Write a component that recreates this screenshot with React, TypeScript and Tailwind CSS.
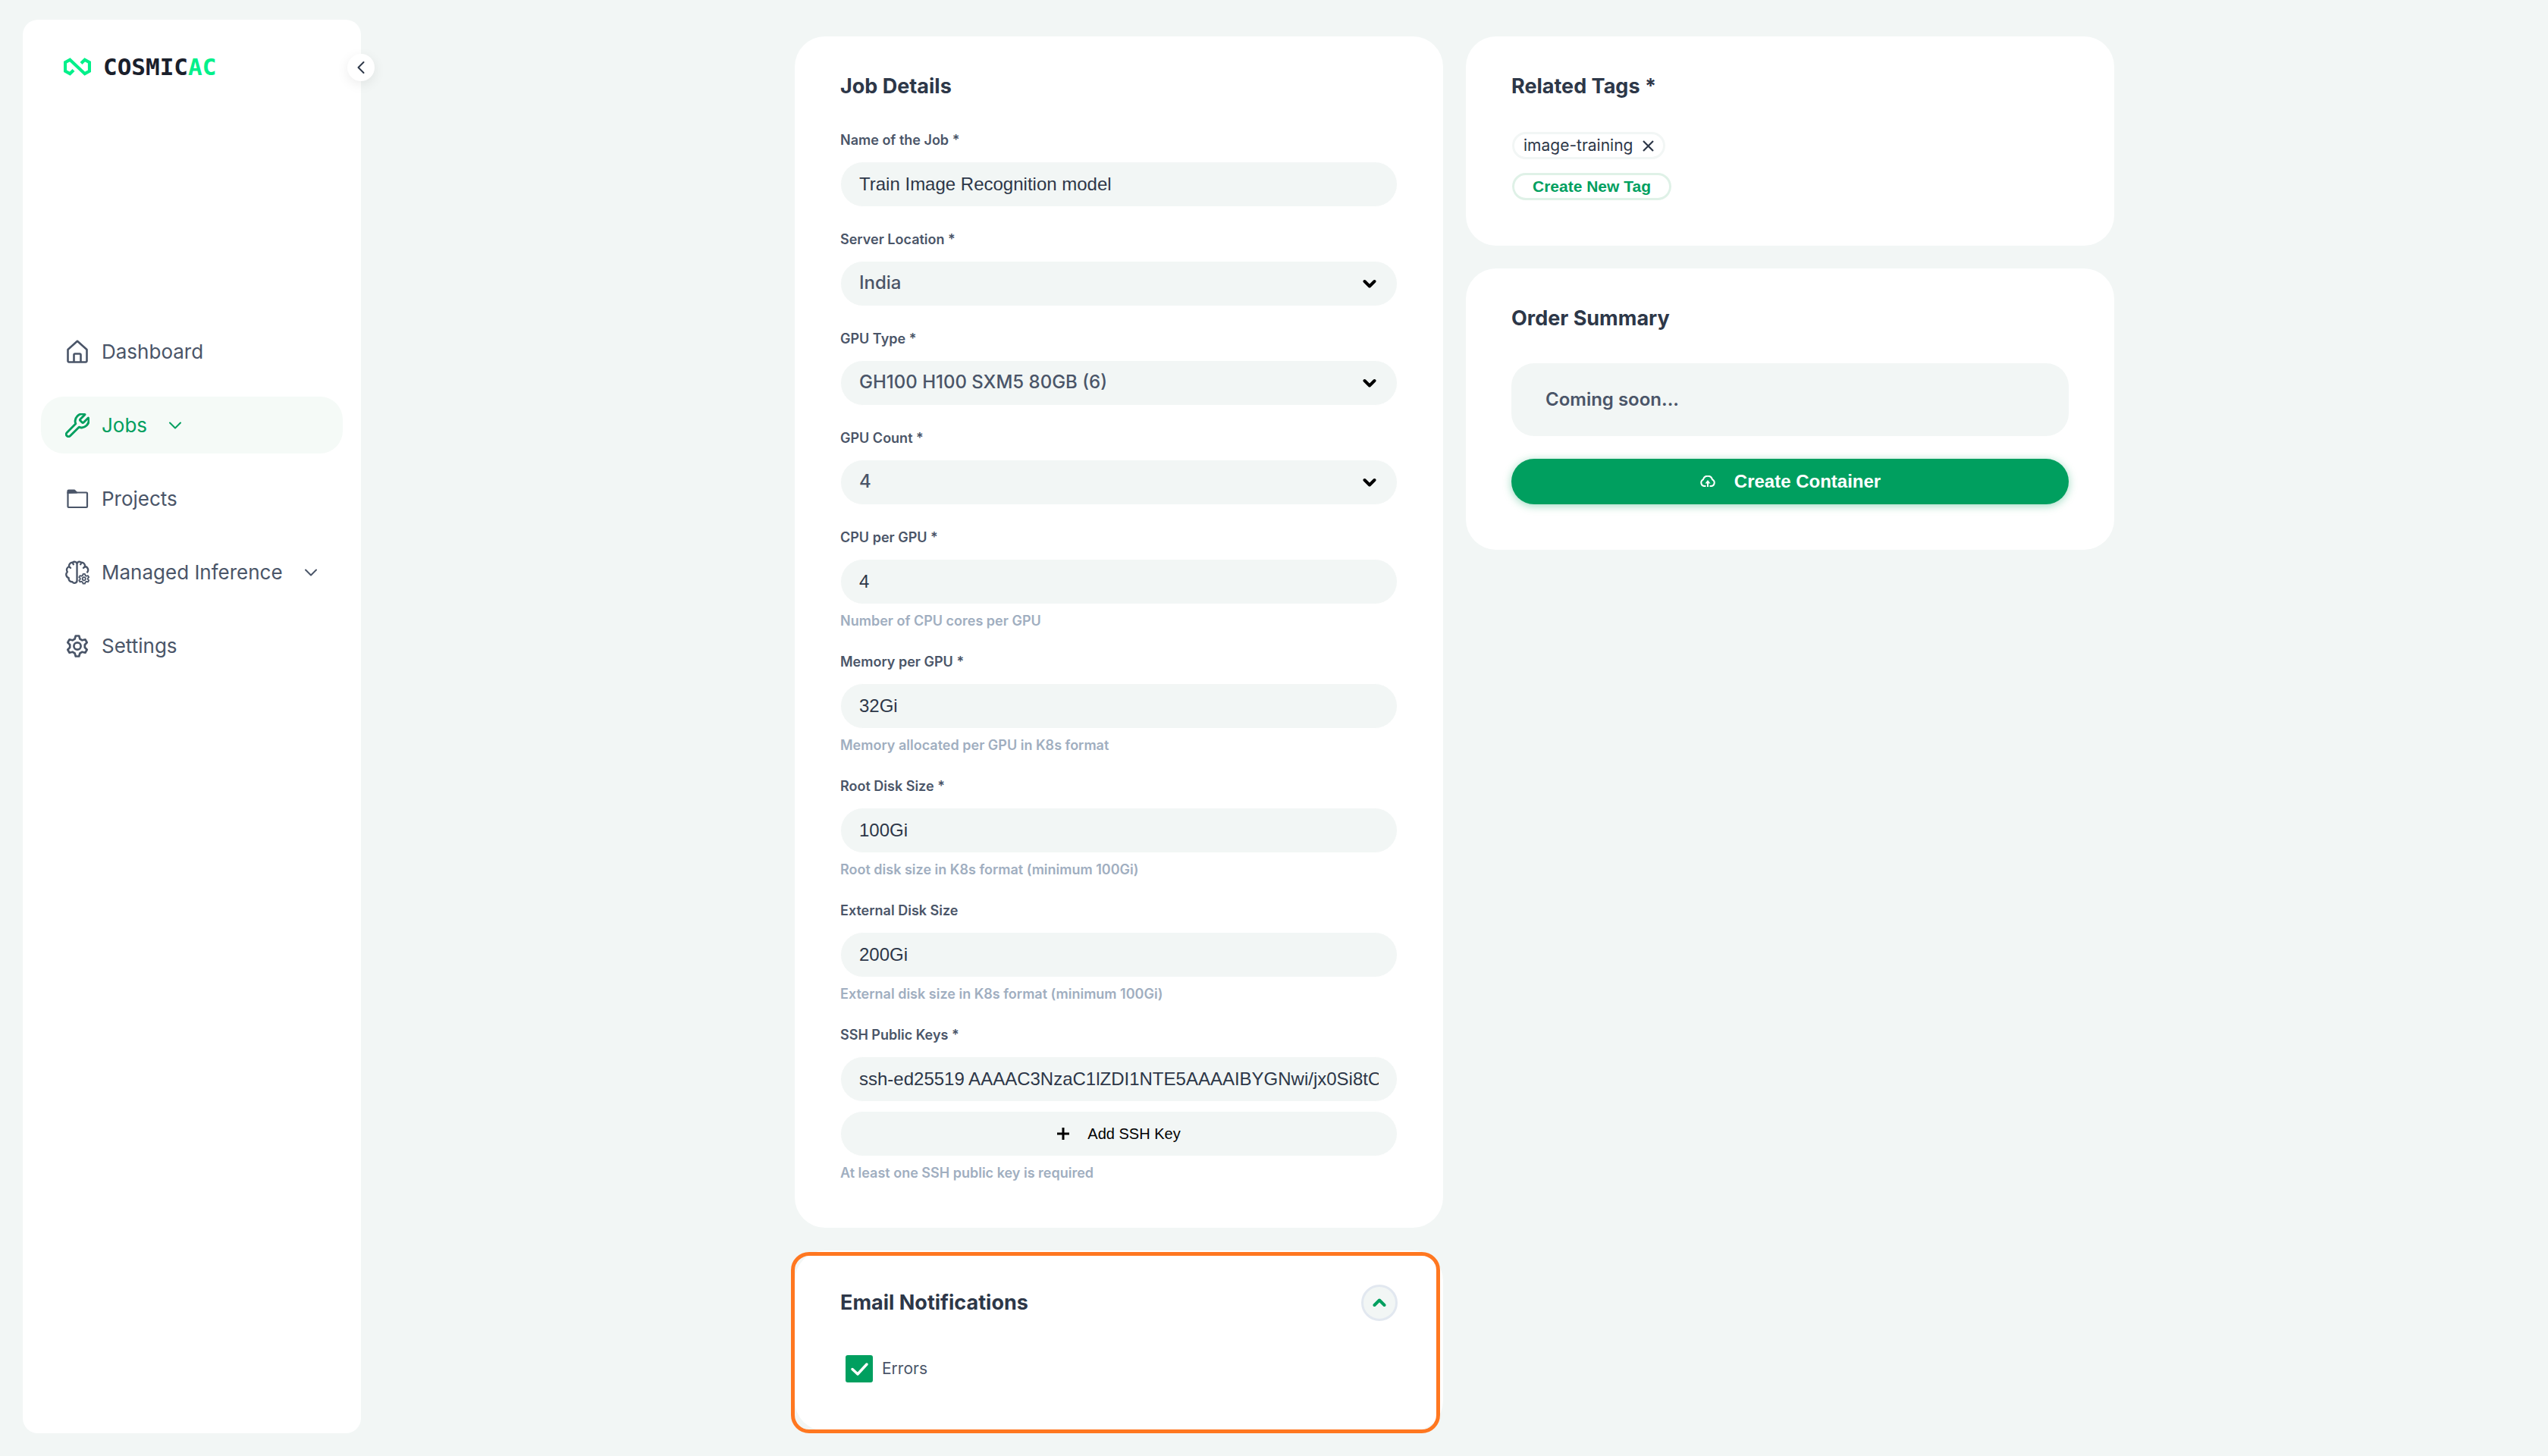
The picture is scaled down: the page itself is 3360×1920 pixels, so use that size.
import { useId, useState, type ReactNode } from "react";

type IconProps = { className?: string };

function LogoMark({ className }: IconProps) {
  return (
    <svg className={className} viewBox="0 0 36 24" fill="none" stroke="currentColor" strokeWidth="4.2" aria-hidden="true">
      <path d="M13 16.5 L8.2 21.2 L2 17.8 V6.2 L8.2 2.8 L27.800 21.2 L34 17.8 V6.2 L27.800 2.8 L23 7.5" />
    </svg>
  );
}

function HomeIcon({ className }: IconProps) {
  return (
    <svg className={className} viewBox="0 0 32 32" fill="none" stroke="currentColor" strokeWidth="2.6" strokeLinejoin="round" aria-hidden="true">
      <path d="M3.5 13 L16 1.8 L28.5 13 V28 a1.5 1.5 0 0 1 -1.5 1.5 H5 a1.5 1.5 0 0 1 -1.5 -1.5 Z" />
      <path d="M11.5 29 V20 a1.5 1.5 0 0 1 1.5 -1.5 h6 a1.5 1.5 0 0 1 1.5 1.5 V29" />
    </svg>
  );
}

function WrenchIcon({ className }: IconProps) {
  return (
    <svg className={className} viewBox="1 1 22 22" fill="none" stroke="currentColor" strokeWidth="2" strokeLinecap="round" strokeLinejoin="round" aria-hidden="true">
      <path d="M14.7 6.3a1 1 0 0 0 0 1.4l1.6 1.6a1 1 0 0 0 1.4 0l4.200-4.200a6.500 6.500 0 0 1-8.400 8.400l-8 8a2.100 2.100 0 0 1-3-3l8-8a6.500 6.500 0 0 1 8.400-8.400z" />
    </svg>
  );
}

function FolderIcon({ className }: IconProps) {
  return (
    <svg className={className} viewBox="0 0 32 32" fill="none" stroke="currentColor" strokeWidth="2.2" strokeLinejoin="round" aria-hidden="true">
      <path d="M3.5 7.5 H28 a1 1 0 0 1 1 1 V26 a1 1 0 0 1 -1 1 H4.5 a1 1 0 0 1 -1 -1 Z" />
      <path d="M3.5 8 V5.5 a1 1 0 0 1 1 -1 H12 L15 7.5 Z" fill="currentColor" />
    </svg>
  );
}

function GearIcon({ className }: IconProps) {
  return (
    <svg className={className} viewBox="0 0 32 32" fill="none" stroke="currentColor" strokeWidth="2.7" strokeLinejoin="round" aria-hidden="true">
      <path d="M13.8 2.5 h4.4 l1.2 4 3 1.8 4 -1 2.3 3.900 -2.900 3 v3.600 l2.900 3 -2.300 3.900 -4 -1 -3 1.800 -1.200 4 h-4.400 l-1.200 -4 -3 -1.800 -4 1 -2.300 -3.900 2.900 -3 v-3.600 l-2.900 -3 2.300 -3.900 4 1 3 -1.800 z" />
      <circle cx="16" cy="16" r="4.6" />
    </svg>
  );
}

function BrainGearIcon({ className }: IconProps) {
  return (
    <svg className={className} viewBox="0 0 34 34" fill="none" stroke="currentColor" strokeWidth="2.5" strokeLinecap="round" strokeLinejoin="round" aria-hidden="true">
      <path d="M16.5 4 V28 a3.5 3.5 0 0 1 -6.5 2 a4.5 4.5 0 0 1 -5 -5.5 a5 5 0 0 1 -2 -8.5 a5 5 0 0 1 2.5 -7.5 a4.5 4.5 0 0 1 5 -5.5 a3.6 3.6 0 0 1 6 1.5" />
      <path d="M16.5 4 a3.6 3.6 0 0 1 6 -1 a4.5 4.5 0 0 1 5 5.5 a5 5 0 0 1 3.5 8" />
      <path d="M5.5 9 l2 1.5 M10.5 3.5 l1 2 M27.5 9 l-2 1.5 M22.5 3.5 l-1 2" />
      <path d="M25 19 h2.6 l.6 2.1 1.6 .9 2.100 -.6 1.300 2.200 -1.600 1.600 v1.200 l1.600 1.600 -1.300 2.200 -2.100 -.6 -1.600 .9 -.6 2.100 h-2.600 l-.6 -2.100 -1.600 -.9 -2.100 .6 -1.300 -2.200 1.600 -1.600 v-1.200 l-1.600 -1.600 1.300 -2.200 2.100 .6 1.600 -.9 z" strokeWidth="1.9" />
      <circle cx="26.3" cy="25.8" r="2.2" strokeWidth="1.9" />
    </svg>
  );
}

function CloudUploadIcon({ className }: IconProps) {
  return (
    <svg className={className} viewBox="0 0 22 16" fill="none" stroke="currentColor" strokeWidth="2" strokeLinejoin="round" aria-hidden="true">
      <path d="M8.5 14 H6 A4.6 4.6 0 0 1 5 5.3 A6.2 6.2 0 0 1 17 5.3 A4.6 4.6 0 0 1 16 14 H13.5" />
      <path d="M11 15 V8" />
      <path d="M11 6 L14.5 10.5 H7.5 Z" fill="currentColor" stroke="none" />
    </svg>
  );
}

function Chevron({ className, stroke = 2 }: IconProps & { stroke?: number }) {
  return (
    <svg className={className} viewBox="0 0 18 10" fill="none" stroke="currentColor" strokeWidth={stroke} strokeLinecap="round" strokeLinejoin="round" aria-hidden="true">
      <path d="M2 1.5 L9 8.5 L16 1.5" />
    </svg>
  );
}

// Heavier chevron used inside form controls
function BoldChevron({ className }: IconProps) {
  return (
    <svg className={className} viewBox="0 0 18 12" fill="none" stroke="currentColor" strokeWidth="4" strokeLinecap="round" strokeLinejoin="round" aria-hidden="true">
      <path d="M2.5 3 L9 9.5 L15.5 3" />
    </svg>
  );
}

const navItems = [
  { label: "Dashboard", icon: HomeIcon },
  { label: "Jobs", icon: WrenchIcon, active: true, expandable: true },
  { label: "Projects", icon: FolderIcon },
  { label: "Managed Inference", icon: BrainGearIcon, expandable: true },
  { label: "Settings", icon: GearIcon },
];

function Sidebar() {
  return (
    <aside className="relative mt-[26px] mb-[30px] ml-[30px] w-[446px] shrink-0 rounded-[20px] bg-white">
      <a href="#" className="mt-11 ml-[54px] flex h-9 items-center gap-4 font-['DejaVu_Sans_Mono',monospace] text-[31px] leading-9 font-bold text-[#1a202c]">
        <LogoMark className="h-6 w-9 text-[#00f08a]" />
        <span>
          COSMIC<span className="text-[#00f08a]">AC</span>
        </span>
      </a>
      <button
        type="button"
        aria-label="Collapse sidebar"
        className="absolute top-[45px] -right-[18px] flex size-9 items-center justify-center rounded-full bg-white text-[#2d3748] shadow-[0_4px_16px_rgba(0,0,0,0.08)]"
      >
        <Chevron className="h-[10px] w-[18px] rotate-90" />
      </button>
      <nav className="mx-6 mt-[320px] flex flex-col gap-[22px]">
        {navItems.map(({ label, icon: Icon, active, expandable }) => (
          <a
            key={label}
            href="#"
            aria-current={active ? "page" : undefined}
            className={`flex h-[75px] items-center rounded-[30px] pl-8 text-[26px] leading-9 ${
              active ? "bg-[#f5faf7] text-[#009f5f]" : "text-[#4a5568]"
            }`}
          >
            <Icon className="mr-4 size-8" />
            {label}
            {expandable && <Chevron className="ml-7 h-[10px] w-[18px]" />}
          </a>
        ))}
      </nav>
    </aside>
  );
}

function Card({ title, children }: { title: string; children: ReactNode }) {
  return (
    <section className="rounded-[40px] bg-white px-[60px] pt-12 pb-[60px]">
      <h2 className="mb-[41px] text-[27px] leading-9 font-bold text-[#2d3748]">{title}</h2>
      {children}
    </section>
  );
}

const inputClass =
  "block h-[60px] w-full rounded-[30px] border border-white bg-[#f2f6f5] px-6 font-['Liberation_Sans',Arial,sans-serif] text-2xl text-[#2d3748] outline-none";

function Hint({ children }: { children: ReactNode }) {
  return <p className="mt-[11px] text-[18px] leading-[22px] font-semibold text-[#a0aec0]">{children}</p>;
}

function Label({ htmlFor, children }: { htmlFor: string; children: ReactNode }) {
  return (
    <label htmlFor={htmlFor} className="mb-4 block text-[18px] leading-6 font-semibold text-[#4a5568]">
      {children}
    </label>
  );
}

function TextField({ label, value, hint }: { label: string; value: string; hint?: string }) {
  const id = useId();
  return (
    <div>
      <Label htmlFor={id}>{label}</Label>
      <input id={id} type="text" defaultValue={value} className={inputClass} />
      {hint && <Hint>{hint}</Hint>}
    </div>
  );
}

function SelectField({ label, value }: { label: string; value: string }) {
  const id = useId();
  return (
    <div>
      <Label htmlFor={id}>{label}</Label>
      <div className="relative">
        <select
          id={id}
          defaultValue={value}
          className="block h-[60px] w-full appearance-none rounded-[30px] border border-white bg-[#f2f6f5] px-6 pb-0.5 text-2xl font-medium text-[#4a5568] outline-none"
        >
          <option>{value}</option>
        </select>
        <BoldChevron className="pointer-events-none absolute top-6 right-7 h-3 w-[18px] text-black" />
      </div>
    </div>
  );
}

function JobDetails() {
  const sshId = useId();
  return (
    <Card title="Job Details">
      <div className="flex flex-col gap-[31px] pb-px">
        <TextField label="Name of the Job *" value="Train Image Recognition model" />
        <SelectField label="Server Location *" value="India" />
        <SelectField label="GPU Type *" value="GH100 H100 SXM5 80GB (6)" />
        <SelectField label="GPU Count *" value="4" />
        <TextField label="CPU per GPU *" value="4" hint="Number of CPU cores per GPU" />
        <TextField label="Memory per GPU *" value="32Gi" hint="Memory allocated per GPU in K8s format" />
        <TextField label="Root Disk Size *" value="100Gi" hint="Root disk size in K8s format (minimum 100Gi)" />
        <TextField label="External Disk Size" value="200Gi" hint="External disk size in K8s format (minimum 100Gi)" />
        <div>
          <Label htmlFor={sshId}>SSH Public Keys *</Label>
          <input
            id={sshId}
            type="text"
            defaultValue="ssh-ed25519 AAAAC3NzaC1lZDI1NTE5AAAAIBYGNwi/jx0Si8tO"
            className={inputClass}
          />
          <button
            type="button"
            className="mt-3 flex h-[60px] w-full items-center justify-center gap-6 rounded-[30px] border border-white bg-[#f2f6f5] font-['Liberation_Sans',Arial,sans-serif] text-xl text-black"
          >
            <svg className="size-4" viewBox="0 0 16 16" stroke="currentColor" strokeWidth="3" aria-hidden="true">
              <path d="M8 0 V16 M0 8 H16" />
            </svg>
            Add SSH Key
          </button>
          <Hint>At least one SSH public key is required</Hint>
        </div>
      </div>
    </Card>
  );
}

function EmailNotifications() {
  const [open, setOpen] = useState(true);
  const [errors, setErrors] = useState(true);
  return (
    <section className="relative rounded-[40px] bg-white px-[60px] pt-[45px] pb-16">
      {/* Highlight ring, drawn over the card edge */}
      <div className="pointer-events-none absolute top-[2px] right-1 -bottom-[3px] -left-[5px] rounded-[24px] border-[5px] border-[#ff7720]" />
      <div className="flex items-center justify-between">
        <h2 className="text-[27px] leading-9 font-bold text-[#2d3748]">Email Notifications</h2>
        <button
          type="button"
          aria-label="Toggle email notifications"
          aria-expanded={open}
          onClick={() => { setOpen(!open); }}
          className="flex size-12 items-center justify-center rounded-full border-[3px] border-[#e2e8f0] bg-[#f2f6f5] text-[#009f5f]"
        >
          <BoldChevron className={open ? "h-3 w-[18px] rotate-180" : "h-3 w-[18px]"} />
        </button>
      </div>
      {open && (
        <label className="mt-[45px] ml-[7px] flex w-fit items-center gap-3 text-[21px] leading-9 text-[#4a5568]">
          <span className="relative size-9">
            <input
              type="checkbox"
              checked={errors}
              onChange={() => { setErrors(!errors); }}
              className="block size-9 appearance-none rounded-[3px] border-2 border-[#009f5f] checked:bg-[#009f5f]"
            />
            {errors && (
              <svg className="pointer-events-none absolute inset-0 size-9" viewBox="0 0 36 36" fill="none" stroke="white" strokeWidth="3.5" strokeLinecap="round" strokeLinejoin="round" aria-hidden="true">
                <path d="M9 18.5 L16 25 L28 12" />
              </svg>
            )}
          </span>
          Errors
        </label>
      )}
    </section>
  );
}

function RelatedTags() {
  return (
    <Card title="Related Tags *">
      <div className="flex flex-col items-start gap-[18px] pt-px pl-px">
        <span className="flex h-9 items-center gap-3 rounded-full border-[3px] border-[#f2f6f5] px-3 text-[21px] leading-7 text-[#2d3748]">
          image-training
          <button type="button" aria-label="Remove tag image-training">
            <svg className="size-[15px]" viewBox="0 0 15 15" stroke="currentColor" strokeWidth="2.2" aria-hidden="true">
              <path d="M1 1 L14 14 M14 1 L1 14" />
            </svg>
          </button>
        </span>
        <button
          type="button"
          className="h-9 rounded-full border-[3px] border-[#dff1e7] px-6 font-['Liberation_Sans',Arial,sans-serif] text-[21px] leading-7 font-bold text-[#009f5f]"
        >
          Create New Tag
        </button>
      </div>
    </Card>
  );
}

function OrderSummary() {
  return (
    <Card title="Order Summary">
      <p className="rounded-[30px] bg-[#f2f6f5] px-[45px] py-[30px] text-2xl leading-9 font-semibold text-[#4a5568]">
        Coming soon...
      </p>
      <button
        type="button"
        className="mt-[30px] flex h-[60px] w-full items-center justify-center gap-6 rounded-[30px] bg-[#009f5f] font-['Liberation_Sans',Arial,sans-serif] text-2xl font-bold text-white shadow-[0_2px_12px_rgba(0,159,95,0.4)]"
      >
        <CloudUploadIcon className="h-4 w-[22px]" />
        Create Container
      </button>
    </Card>
  );
}

export default function App() {
  return (
    <div className="flex min-h-screen bg-[#f2f6f5] font-['Inter',sans-serif]">
      <Sidebar />
      <main className="flex-1 pt-12 pb-[33px]">
        <div className="mx-auto grid max-w-[1740px] grid-cols-2 items-start gap-[30px]">
          <div className="flex flex-col gap-[30px]">
            <JobDetails />
            <EmailNotifications />
          </div>
          <div className="flex flex-col gap-[30px]">
            <RelatedTags />
            <OrderSummary />
          </div>
        </div>
      </main>
    </div>
  );
}
